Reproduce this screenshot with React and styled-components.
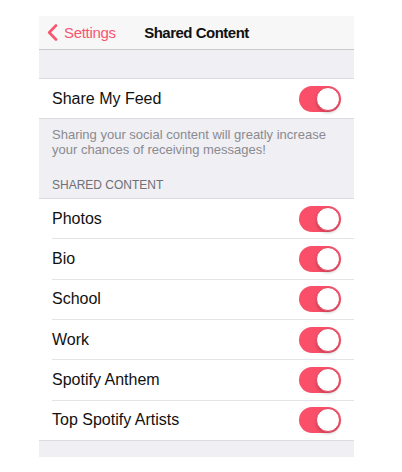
import React from "react"
import styled, { createGlobalStyle } from "styled-components"

const GlobalStyle = createGlobalStyle`
  body {
    margin: 0;
    background: #fff;
    font-family: "Liberation Sans", Arial, sans-serif;
    -webkit-font-smoothing: antialiased;
  }
`

const Screen = styled.div`
  width: 315px;
  margin: 16px 0 0 39px;
  background: #efeff4;
  padding-bottom: 16px;
`

const NavBar = styled.div`
  position: relative;
  height: 33px;
  display: flex;
  align-items: center;
  justify-content: center;
  background: #f7f7f8;
  border-bottom: 1px solid #c9c9cc;
`

const BackButton = styled.div`
  position: absolute;
  left: 8px;
  top: 0;
  bottom: 0;
  display: flex;
  align-items: center;
  gap: 6px;
  color: #f7566f;
  font-size: 15px;
  letter-spacing: -0.3px;
`

const NavTitle = styled.div`
  font-size: 15px;
  font-weight: 700;
  letter-spacing: -0.5px;
  color: #111;
`

const Spacer = styled.div`
  height: 28px;
`

const Group = styled.div`
  background: #fff;
  border-top: 1px solid #dcdce0;
  border-bottom: 1px solid #dcdce0;
`

const Row = styled.div`
  height: ${props => (props.$tall ? "39.33px" : "39px")};
  display: flex;
  align-items: center;
  justify-content: space-between;
  padding: 0 13px;
  font-size: 16px;
  color: #111;
`

const Separator = styled.div`
  height: 1px;
  margin-left: 13px;
  background: #e4e4e8;
`

const Footer = styled.div`
  padding: 8px 13px 0;
  font-size: 13px;
  line-height: 15px;
  color: #8a8a8f;
`

const SectionHeader = styled.div`
  padding: 21px 13px 6px;
  font-size: 12px;
  line-height: 14px;
  color: #707075;
`

const Track = styled.div`
  width: 42px;
  height: 26px;
  border-radius: 13px;
  background: #f94f68;
  display: flex;
  align-items: center;
  justify-content: flex-end;
  padding: 0 1px;
  box-sizing: border-box;
`

const Knob = styled.div`
  width: 24px;
  height: 24px;
  border-radius: 50%;
  background: #fff;
  box-sizing: border-box;
  border: 1px solid #e2445d;
  box-shadow: 0 2px 3px rgba(0, 0, 0, 0.18);
`

const Toggle = () => (
  <Track>
    <Knob />
  </Track>
)

const Chevron = () => (
  <svg width="11" height="17" viewBox="0 0 11 17">
    <path
      d="M9 1.5 L2.2 8.5 L9 15.5"
      fill="none"
      stroke="#f7566f"
      strokeWidth="2.6"
      strokeLinecap="round"
      strokeLinejoin="round"
    />
  </svg>
)

const shared = ["Photos", "Bio", "School", "Work", "Spotify Anthem", "Top Spotify Artists"]

export default function App() {
  return (
    <>
      <GlobalStyle />
      <Screen>
        <NavBar>
          <BackButton>
            <Chevron />
            Settings
          </BackButton>
          <NavTitle>Shared Content</NavTitle>
        </NavBar>
        <Spacer />
        <Group>
          <Row>
            Share My Feed
            <Toggle />
          </Row>
        </Group>
        <Footer>
          Sharing your social content will greatly increase your chances of
          receiving messages!
        </Footer>
        <SectionHeader>SHARED CONTENT</SectionHeader>
        <Group>
          {shared.map((label, i) => (
            <React.Fragment key={label}>
              {i > 0 && <Separator />}
              <Row $tall>
                {label}
                <Toggle />
              </Row>
            </React.Fragment>
          ))}
        </Group>
      </Screen>
    </>
  )
}
